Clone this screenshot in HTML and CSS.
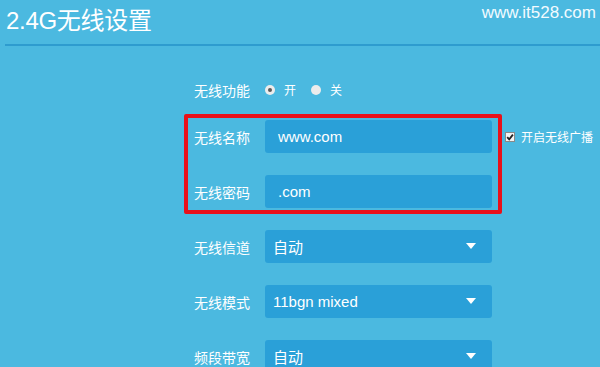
FILE: index.html
```html
<!DOCTYPE html>
<html lang="zh-CN">
<head>
  <meta charset="UTF-8" />
  <title>2.4G无线设置</title>
  <link rel="stylesheet" href="styles.css">
</head>
<body>
  <header class="top">
    <h1>2.4G无线设置</h1>
    <span class="site">www.it528.com</span>
  </header>
  <div class="rule"></div>
  <section class="settings">
    <div class="row radio-row">
      <label class="name">无线功能</label>
      <span class="radio on"></span><span class="opt">开</span>
      <span class="radio"></span><span class="opt">关</span>
    </div>
    <div class="row">
      <label class="name">无线名称</label>
      <div class="field">www.com</div>
      <span class="check">
        <svg width="10" height="10" viewBox="0 0 10 10"><rect x="0.5" y="0.5" width="9" height="9" fill="#f4f4f4" stroke="#8a8a8a"/><path d="M2.2 5.2 L4.2 7.3 L7.9 2.6" fill="none" stroke="#222" stroke-width="1.8"/></svg>
        开启无线广播
      </span>
    </div>
    <div class="row">
      <label class="name">无线密码</label>
      <div class="field">.com</div>
    </div>
    <div class="row">
      <label class="name">无线信道</label>
      <div class="field select">自动<span class="arrow"></span></div>
    </div>
    <div class="row">
      <label class="name">无线模式</label>
      <div class="field select">11bgn mixed<span class="arrow"></span></div>
    </div>
    <div class="row">
      <label class="name">频段带宽</label>
      <div class="field select">自动<span class="arrow"></span></div>
    </div>
    <div class="highlight"></div>
  </section>
</body>
</html>
```
FILE: styles.css
```css
body {
  margin: 0;
  background: #4bb9e0;
  color: #ffffff;
  font-family: 'Liberation Sans', 'Noto Sans CJK SC', sans-serif;
  overflow: hidden;
  height: 367px;
}
.top {
  display: flex;
  justify-content: space-between;
  align-items: flex-start;
  padding: 0 4px 0 6px;
  height: 44px;
}
.top h1 {
  margin: 0;
  padding-top: 5px;
  font-size: 24px;
  font-weight: normal;
  line-height: 32px;
  letter-spacing: -0.3px;
}
.site {
  font-size: 17px;
  line-height: 20px;
  padding-top: 3px;
  color: #f2fbff;
}
.rule {
  margin-left: 5px;
  height: 0;
  border-top: 2px solid #2e9ccf;
}
.settings {
  position: relative;
  padding: 27px 0 0 194px;
  display: flex;
  flex-direction: column;
  gap: 22px;
}
.row {
  display: flex;
  align-items: center;
  height: 33px;
}
.radio-row {
  margin-bottom: -8px;
}
.name {
  width: 71px;
  font-size: 14px;
  flex-shrink: 0;
}
.radio {
  width: 10px;
  height: 10px;
  border-radius: 50%;
  background: #ececec;
  margin-right: 9px;
  position: relative;
}
.radio.on::after {
  content: '';
  position: absolute;
  left: 3px;
  top: 3px;
  width: 4px;
  height: 4px;
  border-radius: 50%;
  background: #5a5a5a;
}
.opt {
  font-size: 12px;
  margin-right: 15px;
}
.field {
  width: 227px;
  height: 33px;
  box-sizing: border-box;
  background: #2aa0d8;
  border-radius: 3px;
  padding: 0 13px;
  display: flex;
  align-items: center;
  font-size: 15px;
  position: relative;
}
.select {
  padding-left: 8px;
}
.arrow {
  position: absolute;
  right: 16px;
  top: 13px;
  width: 0;
  height: 0;
  border-left: 5px solid transparent;
  border-right: 5px solid transparent;
  border-top: 6px solid #ffffff;
}
.check {
  margin-left: 13px;
  font-size: 12px;
  display: flex;
  align-items: center;
  gap: 6px;
}
.check svg {
  display: block;
}
.highlight {
  position: absolute;
  left: 184px;
  top: 68px;
  width: 310px;
  height: 92px;
  border: 4px solid #e8101a;
  border-radius: 2px;
}
```
